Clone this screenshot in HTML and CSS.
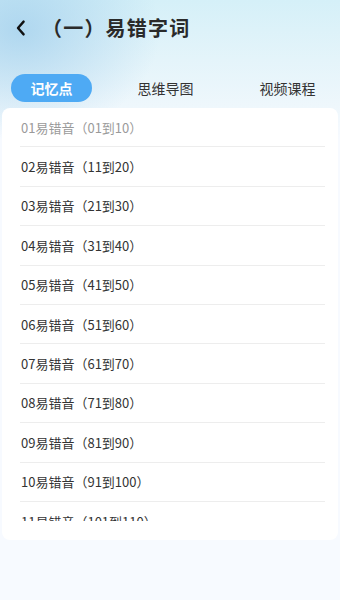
FILE: index.html
```html
<!DOCTYPE html>
<html lang="zh-CN">
<head>
<meta charset="utf-8">
<meta name="viewport" content="width=340">
<title>（一）易错字词</title>
<link rel="stylesheet" href="styles.css">
</head>
<body>
<div class="page">
  <header class="topbar">
    <span class="back">
      <svg width="12" height="18" viewBox="0 0 12 18"><path d="M8.6 2.6 L3 9 L8.6 15.4" fill="none" stroke="#111" stroke-width="2.4" stroke-linecap="round" stroke-linejoin="round"/></svg>
    </span>
    <h1 class="title">（一）易错字词</h1>
  </header>
  <nav class="tabs">
    <span class="tab tab-active">记忆点</span>
    <span class="tab tab-2">思维导图</span>
    <span class="tab tab-3">视频课程</span>
  </nav>
  <section class="card">
    <ul class="list">
      <li class="row row-first">01易错音（01到10）</li>
      <li class="row">02易错音（11到20）</li>
      <li class="row">03易错音（21到30）</li>
      <li class="row">04易错音（31到40）</li>
      <li class="row">05易错音（41到50）</li>
      <li class="row">06易错音（51到60）</li>
      <li class="row">07易错音（61到70）</li>
      <li class="row">08易错音（71到80）</li>
      <li class="row">09易错音（81到90）</li>
      <li class="row">10易错音（91到100）</li>
      <li class="row">11易错音（101到110）</li>
    </ul>
  </section>
</div>
</body>
</html>
```

FILE: styles.css
```css
* { box-sizing: border-box; }
html, body {
  margin: 0;
  padding: 0;
  width: 340px;
  height: 600px;
  overflow: hidden;
  font-family: "Noto Sans CJK SC", "Noto Sans", sans-serif;
  background: #f7faff;
}
.page {
  width: 340px;
  height: 600px;
  background:
    radial-gradient(ellipse 140px 110px at 20px 30px, rgba(160, 206, 236, 0.75), rgba(160, 206, 236, 0) 100%),
    linear-gradient(180deg, #d5f0f8 0px, #e4f4fa 60px, #eef7fc 105px, #f7faff 140px, #f7faff 600px);
  display: flex;
  flex-direction: column;
}
.topbar {
  height: 56px;
  display: flex;
  align-items: center;
  padding-left: 15px;
}
.back {
  width: 12px;
  height: 18px;
  display: flex;
}
.title {
  margin: 0 0 0 15px;
  font-size: 20px;
  font-weight: 700;
  color: #2a2a2a;
  line-height: 28px;
  letter-spacing: 1.2px;
}
.tabs {
  display: flex;
  align-items: center;
  height: 28px;
  margin-top: 18px;
  padding-left: 11px;
}
.tab {
  width: 81px;
  height: 28px;
  border-radius: 14px;
  display: flex;
  align-items: center;
  justify-content: center;
  font-size: 14px;
  color: #333;
}
.tab-active {
  background: #4eaaf4;
  color: #fff;
  font-weight: 700;
}
.tab-2 { margin-left: 33px; }
.tab-3 { margin-left: 41px; }
.card {
  margin: 6px 2px 0 2px;
  background: #fff;
  border-radius: 8px;
  padding: 0 13px 19px 18px;
}
.list {
  list-style: none;
  margin: 0;
  padding: 0;
  height: 413px;
  overflow: hidden;
}
.row {
  height: 39.4px;
  border-bottom: 1px solid #ededed;
  display: flex;
  align-items: center;
  padding-left: 1px;
  font-size: 13px;
  color: #333;
}
.row-first { color: #9a9a9a; }
```
